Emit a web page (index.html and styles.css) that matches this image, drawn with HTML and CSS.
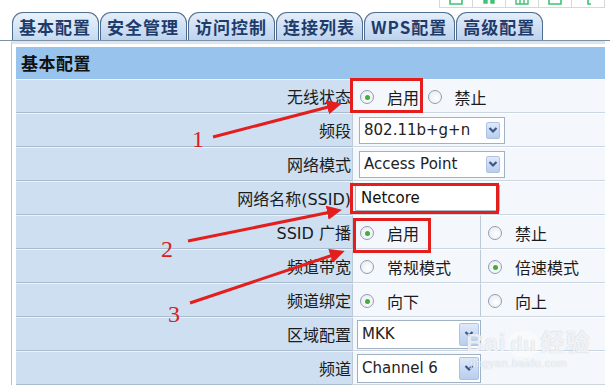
FILE: index.html
```html
<!DOCTYPE html>
<html lang="zh-CN">
<head>
    <meta charset="UTF-8">
    <title>无线基本配置</title>
    <link rel="stylesheet" href="styles.css">
</head>
<body>
    <div class="page">
        <div class="topbar">
            <div class="tools">
                <span class="tool"><svg width="16" height="6"><path d="M2 0 V4 H14 V0" fill="none" stroke="#3cc373" stroke-width="1.6"/></svg></span>
                <span class="tool"><svg width="16" height="6"><path d="M3 0 V3 H6 V0 M10 0 V3 H13 V0" fill="#3cc373" stroke="#3cc373" stroke-width="1.4"/></svg></span>
                <span class="tool"><svg width="16" height="6"><path d="M2 0 V4 H14 V0 M6 0 V4 M10 0 V4" fill="none" stroke="#3cc373" stroke-width="1.4"/></svg></span>
                <span class="tool"><svg width="16" height="6"><path d="M2 0 V4 H14 V0" fill="none" stroke="#3cc373" stroke-width="1.6"/></svg></span>
                <span class="tool"><svg width="16" height="6"><path d="M8 0 V4 H11" fill="none" stroke="#3cc373" stroke-width="1.6"/></svg></span>
            </div>
        </div>

        <ul class="tabs">
            <li class="tab active">基本配置</li>
            <li class="tab">安全管理</li>
            <li class="tab">访问控制</li>
            <li class="tab">连接列表</li>
            <li class="tab">WPS配置</li>
            <li class="tab">高级配置</li>
        </ul>

        <div class="panel">
            <div class="panel-title">基本配置</div>
            <table class="form">
                <colgroup>
                    <col class="col-label">
                    <col class="col-a">
                    <col class="col-b">
                </colgroup>
                <tr>
                    <th>无线状态</th>
                    <td colspan="2">
                        <span class="opt"><span class="radio on"></span>启用</span>
                        <span class="opt next"><span class="radio"></span>禁止</span>
                    </td>
                </tr>
                <tr>
                    <th>频段</th>
                    <td colspan="2">
                        <div class="select">802.11b+g+n<span class="arrow"><svg width="12" height="10"><path d="M2.5 3 L6 6.5 L9.5 3" fill="none" stroke="#3b5687" stroke-width="2.2"/></svg></span></div>
                    </td>
                </tr>
                <tr>
                    <th>网络模式</th>
                    <td colspan="2">
                        <div class="select">Access Point<span class="arrow"><svg width="12" height="10"><path d="M2.5 3 L6 6.5 L9.5 3" fill="none" stroke="#3b5687" stroke-width="2.2"/></svg></span></div>
                    </td>
                </tr>
                <tr>
                    <th>网络名称(SSID)</th>
                    <td colspan="2">
                        <div class="text-input">Netcore</div>
                    </td>
                </tr>
                <tr>
                    <th>SSID 广播</th>
                    <td><span class="opt"><span class="radio on"></span>启用</span></td>
                    <td><span class="opt"><span class="radio"></span>禁止</span></td>
                </tr>
                <tr>
                    <th>频道带宽</th>
                    <td><span class="opt"><span class="radio"></span>常规模式</span></td>
                    <td><span class="opt"><span class="radio on"></span>倍速模式</span></td>
                </tr>
                <tr>
                    <th>频道绑定</th>
                    <td><span class="opt"><span class="radio on"></span>向下</span></td>
                    <td><span class="opt"><span class="radio"></span>向上</span></td>
                </tr>
                <tr>
                    <th>区域配置</th>
                    <td colspan="2">
                        <div class="select short">MKK<span class="arrow"><svg width="12" height="10"><path d="M2.5 3 L6 6.5 L9.5 3" fill="none" stroke="#3b5687" stroke-width="2.2"/></svg></span></div>
                    </td>
                </tr>
                <tr>
                    <th>频道</th>
                    <td colspan="2">
                        <div class="select short">Channel 6<span class="arrow"><svg width="12" height="10"><path d="M2.5 3 L6 6.5 L9.5 3" fill="none" stroke="#3b5687" stroke-width="2.2"/></svg></span></div>
                    </td>
                </tr>
            </table>
        </div>

        <!-- red annotations drawn over the form -->
        <svg class="marks" width="610" height="385">
            <defs>
                <marker id="head" markerWidth="6" markerHeight="6" refX="3" refY="3" orient="auto" markerUnits="strokeWidth">
                    <path d="M0 0.6 L5 3 L0 5.4 Z" fill="#e41d1d"/>
                </marker>
            </defs>
            <rect x="351.5" y="79.5" width="70" height="32" fill="none" stroke="#e41d1d" stroke-width="3"/>
            <rect x="351.5" y="184.5" width="146" height="28" fill="none" stroke="#e41d1d" stroke-width="3"/>
            <rect x="354.5" y="219.5" width="75" height="32" fill="none" stroke="#e41d1d" stroke-width="3"/>
            <line x1="213" y1="137" x2="336" y2="105" stroke="#e41d1d" stroke-width="3" marker-end="url(#head)"/>
            <line x1="188" y1="241" x2="336" y2="211" stroke="#e41d1d" stroke-width="3" marker-end="url(#head)"/>
            <line x1="190" y1="303" x2="339" y2="253" stroke="#e41d1d" stroke-width="3" marker-end="url(#head)"/>
            <text class="num" x="192" y="147">1</text>
            <text class="num" x="161" y="257">2</text>
            <text class="num" x="168" y="322">3</text>
        </svg>

        <div class="watermark">
            <div class="wm-logo">Bai<span class="paw">du</span>经验</div>
            <div class="wm-url">jingyan.baidu.com</div>
        </div>
    </div>
</body>
</html>
```

FILE: styles.css
```css
body {
    margin: 0;
    background: #fff;
    font-family: "DejaVu Sans", "Noto Sans CJK SC", sans-serif;
    color: #1b1b1b;
}

.page {
    position: relative;
    width: 610px;
    height: 385px;
    overflow: hidden;
}

/* browser toolbar fragment, top right */
.topbar {
    display: flex;
    justify-content: flex-end;
    height: 8px;
}

.tools {
    display: flex;
    margin-right: 5px;
    border: 1px solid #d3d9d6;
    border-top: none;
    background: #fff;
}

.tool {
    display: flex;
    justify-content: center;
    align-items: flex-start;
    width: 32px;
    height: 7px;
    border-left: 1px solid #d3d9d6;
}

.tool:first-child {
    border-left: none;
}

/* tabs */
.tabs {
    display: flex;
    list-style: none;
    margin: 4px 0 0;
    padding: 0 0 0 12px;
    height: 28px;
    border-bottom: 1px solid #7c8fa4;
}

.tab {
    box-sizing: border-box;
    height: 28px;
    padding: 0 7px 0 6px;
    margin-right: 1px;
    border: 1px solid #4f6d8f;
    border-bottom: none;
    border-radius: 11px 11px 0 0;
    background: linear-gradient(#e4eefa, #bcd3ee);
    font-family: "Noto Sans CJK SC", sans-serif;
    font-weight: 700;
    font-size: 17px;
    letter-spacing: 1px;
    line-height: 27px;
    color: #1d3c6c;
}

.tab.active {
    background: linear-gradient(#e9f2fb, #c6dbf1);
}

/* panel */
.panel {
    margin: 0 5px 0 11px;
    padding: 3px 0 0 4px;
    border-left: 1px solid #b6c7d8;
    border-top: 3px solid #dbe5ef;
}

.panel-title {
    height: 32px;
    padding-left: 5px;
    background: #98c3ec;
    font-family: "Noto Sans CJK SC", sans-serif;
    font-weight: 700;
    font-size: 17px;
    letter-spacing: 0.5px;
    line-height: 32px;
    color: #111;
}

.form {
    width: 100%;
    border-collapse: separate;
    border-spacing: 0;
    table-layout: fixed;
}

.col-label {
    width: 336px;
}

.col-a {
    width: 128px;
}

.form tr {
    height: 34px;
}

.form th {
    padding: 0 1px 0 0;
    text-align: right;
    font-family: "DejaVu Sans", "Noto Sans CJK SC", sans-serif;
    font-weight: 400;
    font-size: 16px;
    color: #1b1b1b;
    background: #cddff0;
    border-top: 1px solid #ecf3fa;
    border-bottom: 1px solid #a9bccf;
}

.form td {
    padding: 0 0 0 7px;
    background: #f4f7fb;
    border-top: 1px solid #fdfeff;
    border-bottom: 1px solid #cbd6e1;
    border-left: 1px solid #bccad8;
    font-family: "Noto Sans CJK SC", sans-serif;
    font-size: 16px;
    color: #1b1b1b;
}

/* radios */
.opt {
    display: inline-flex;
    align-items: center;
    vertical-align: middle;
}

.opt.next {
    margin-left: 5px;
}

.radio {
    box-sizing: border-box;
    display: inline-flex;
    justify-content: center;
    align-items: center;
    width: 14px;
    height: 14px;
    margin-right: 13px;
    border: 1px solid #8d9fb2;
    border-radius: 50%;
    background: radial-gradient(circle at 60% 60%, #ffffff, #e3e8ee);
}

.radio.on::after {
    content: "";
    width: 5px;
    height: 5px;
    border-radius: 50%;
    background: #3fae3a;
}

/* selects and inputs */
.select {
    box-sizing: border-box;
    display: flex;
    align-items: center;
    width: 146px;
    height: 27px;
    margin-left: -1px;
    padding-left: 4px;
    border: 1px solid #9fb1c3;
    background: #fff;
    font-family: "DejaVu Sans", sans-serif;
    font-size: 15px;
    color: #222;
}

.arrow {
    box-sizing: border-box;
    display: flex;
    justify-content: center;
    align-items: center;
    flex-shrink: 0;
    width: 14px;
    height: 17px;
    margin: 0 4px 0 auto;
    border: 1px solid #aec3e3;
    border-radius: 2px;
    background: linear-gradient(#dfe9f9, #b8cdef);
}

.select.short {
    width: 124px;
    height: 29px;
    margin-left: -3px;
}

.select.short .arrow {
    width: 20px;
    height: 23px;
    margin-right: 1px;
}

.text-input {
    box-sizing: border-box;
    width: 145px;
    height: 26px;
    margin-left: -5px;
    padding-left: 5px;
    border: 1px solid #a9b6c4;
    background: #fff;
    font-family: "DejaVu Sans", sans-serif;
    font-size: 15px;
    line-height: 24px;
    color: #111;
}

/* overlays */
.marks {
    position: absolute;
    left: 0;
    top: 0;
    pointer-events: none;
}

.num {
    font-family: "Liberation Serif", serif;
    font-size: 24px;
    fill: #d8201f;
}

.watermark {
    position: absolute;
    left: 466px;
    top: 330px;
    color: rgba(255, 255, 255, 0.8);
    text-shadow: 0 0 1px rgba(110, 130, 150, 0.45);
    pointer-events: none;
}

.wm-logo {
    font-family: "Liberation Sans", "Noto Sans CJK SC", sans-serif;
    font-weight: 700;
    font-size: 24px;
    line-height: 26px;
    letter-spacing: 1px;
}

.paw {
    display: inline-block;
    margin: 0 2px;
    padding: 0 2px;
    border-radius: 12px;
    background: rgba(255, 255, 255, 0.35);
    font-size: 20px;
}

.wm-url {
    margin-left: 4px;
    font-family: "Liberation Sans", sans-serif;
    font-size: 11px;
    line-height: 12px;
    letter-spacing: 0.5px;
}
```
